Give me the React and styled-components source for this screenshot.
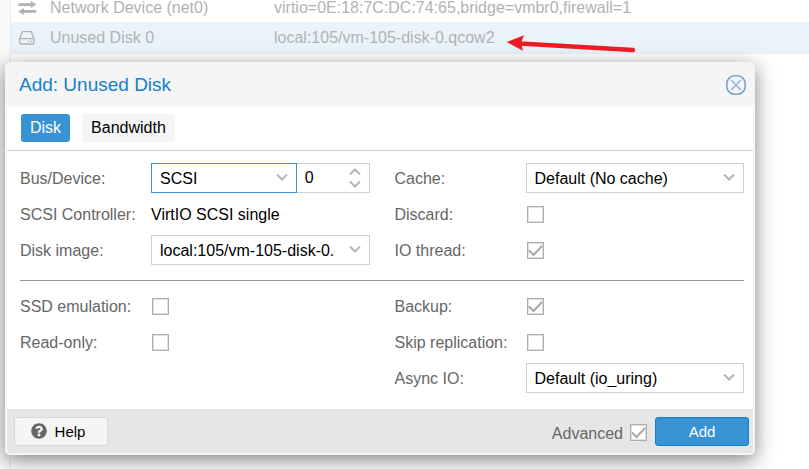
import React, { useState } from 'react';
import styled, { createGlobalStyle, css } from 'styled-components';
import { FaQuestionCircle } from 'react-icons/fa';

const GlobalStyle = createGlobalStyle`
  * {
    box-sizing: border-box;
  }

  body {
    margin: 0;
    background-color: #fafafa;
    color: #000;
  }

  body, button, input, select {
    font-family: "Liberation Sans", Arial, sans-serif;
    font-size: 16px;
  }
`;

const Page = styled.main`
  position: relative;
  min-height: 100vh;
  padding-left: 10px;
  overflow: hidden;
`;

const HardwareList = styled.ul`
  list-style: none;
  margin: 0;
  padding: 0;
  min-height: 100vh;
  border-left: 1px solid #e8e8e8;
  background-color: #fff;
`;

const HardwareRow = styled.li`
  display: grid;
  grid-template-columns: 39px 224px 1fr;
  align-items: center;
  height: ${({ $first }) => ($first ? '22px' : '32px')};
  padding-bottom: ${({ $first }) => ($first ? '8px' : '0')};
  background-color: ${({ $selected }) => ($selected ? '#ebf3fa' : '#fff')};
  color: #b2b2b2;
  line-height: 16px;
  white-space: nowrap;
`;

const RowIcon = styled.svg`
  display: block;
  width: 20px;
  height: 16px;
  margin-left: 6px;
`;

const Arrow = styled.svg`
  position: absolute;
  top: 30px;
  left: 500px;
  width: 140px;
  height: 26px;
`;

const Dialog = styled.section`
  position: absolute;
  top: 62px;
  left: 5px;
  right: 54px;
  border: 2px solid #f5f5f5;
  border-radius: 5px;
  background-color: #fff;
  box-shadow: 0 5px 20px rgba(0, 0, 0, 0.5);
`;

const DialogHeader = styled.header`
  display: flex;
  align-items: center;
  justify-content: space-between;
  height: 43px;
  padding: 0 6px 2px 12px;
  background-color: #f5f5f5;
`;

const Title = styled.h1`
  margin: 0;
  color: #157fcc;
  font-size: 19px;
  font-weight: 400;
`;

const CloseButton = styled.button`
  width: 22px;
  height: 22px;
  padding: 0;
  border: 0;
  background: none;
  cursor: pointer;

  svg {
    display: block;
  }
`;

const Tabs = styled.nav`
  display: flex;
  gap: 12px;
  padding: 7px 14px 8px;
  border-bottom: 1px solid #cfcfcf;
`;

const Tab = styled.button`
  height: 28px;
  padding: 0 9px;
  border: 0;
  border-radius: 3px;
  background-color: ${({ $active }) => ($active ? '#3892d4' : '#f5f5f5')};
  color: ${({ $active }) => ($active ? '#fff' : '#000')};
  cursor: pointer;
`;

const Form = styled.div`
  padding: 12px 9px 16px 13px;
`;

const Columns = styled.div`
  display: grid;
  grid-template-columns: 1fr 1fr;
  column-gap: 25px;
`;

const Column = styled.div`
  display: flex;
  flex-direction: column;
  gap: 6px;
`;

const Separator = styled.hr`
  margin: 15px 0 10px;
  border: 0;
  border-top: 1px solid #949494;
`;

const Row = styled.div`
  display: grid;
  grid-template-columns: 131px 1fr;
  align-items: center;
  height: 30px;
`;

const Label = styled.label`
  padding-top: 2px;
  color: #666;
`;

const DisplayValue = styled.span`
  padding-top: 2px;
`;

const FieldGroup = styled.div`
  display: grid;
  grid-template-columns: 2fr 1fr;
`;

const controlStyle = css`
  display: block;
  width: 100%;
  height: 30px;
  margin: 0;
  padding: 0 34px 0 8px;
  border: 1px solid ${({ $focused }) => ($focused ? '#3892d4' : '#cfcfcf')};
  border-radius: 0;
  background-color: #fff;
  color: #000;
  appearance: none;
  outline: none;
`;

const SelectBox = styled.div`
  position: relative;
  min-width: 0;
`;

const StyledSelect = styled.select`
  ${controlStyle}
`;

const Chevron = styled.svg`
  position: absolute;
  top: 10px;
  right: 9px;
  width: 12px;
  height: 8px;
  fill: none;
  stroke: #b5b5b5;
  stroke-width: 2;
  pointer-events: none;
`;

const NumberInput = styled.input`
  ${controlStyle}
  border-left: 0;
`;

const Stepper = styled.div`
  position: absolute;
  top: 3px;
  right: 9px;
  display: flex;
  flex-direction: column;
`;

const StepButton = styled.button`
  display: flex;
  align-items: center;
  height: 12px;
  padding: 0;
  border: 0;
  background: none;
  cursor: pointer;

  svg {
    width: 12px;
    height: 8px;
    fill: none;
    stroke: #b5b5b5;
    stroke-width: 2;
  }
`;

const CheckWrapper = styled.span`
  position: relative;
  display: block;
  width: 17px;
  height: 17px;
  margin-left: ${({ $inset }) => ($inset ? '1px' : '0')};

  svg {
    position: absolute;
    top: 0;
    left: 0;
    pointer-events: none;
  }
`;

const CheckInput = styled.input`
  display: block;
  width: 17px;
  height: 17px;
  margin: 0;
  border: 1px solid #adadad;
  box-shadow: inset 0 0 0 1px #e0e0e0;
  background-color: #fff;
  appearance: none;
`;

const DialogFooter = styled.footer`
  display: flex;
  align-items: center;
  height: 44px;
  padding: 0 4px 0 7px;
  background-color: #e6e6e6;
  border-radius: 0 0 3px 3px;
`;

const Button = styled.button`
  display: flex;
  align-items: center;
  justify-content: center;
  gap: 8px;
  width: 94px;
  height: 29px;
  padding: 0 6px 0 0;
  border: 1px solid #d8d8d8;
  border-radius: 3px;
  background-color: #f5f5f5;
  font-size: 15px;
  cursor: pointer;

  svg {
    color: #666;
  }

  ${({ $primary }) => $primary && css`
    padding: 0;
    border-color: #157fcc;
    background-color: #3892d4;
    color: #fff;
  `}
`;

const Advanced = styled.div`
  display: flex;
  align-items: center;
  gap: 7px;
  margin: 0 8px 0 auto;
  padding-top: 3px;
`;

const Select = ({ id, options, focused }) => (
  <SelectBox>
    <StyledSelect id={id} $focused={focused}>
      {options.map(o => <option key={o}>{o}</option>)}
    </StyledSelect>
    <Chevron viewBox='0 0 12 8'><path d='M1 1.5 L6 6.5 L11 1.5' /></Chevron>
  </SelectBox>
);

const Checkbox = ({ id, initial = false, inset = true }) => {
  const [checked, setChecked] = useState(initial);

  return (
    <CheckWrapper $inset={inset}>
      <CheckInput
        id={id}
        type='checkbox'
        checked={checked}
        onChange={e => setChecked(e.target.checked)}
      />
      {checked && (
        <svg width='17' height='17' viewBox='0 0 17 17' fill='none' stroke='#a8a8a8' strokeWidth='2'>
          <path d='M2 8.5 L6.5 13 L15 4' />
        </svg>
      )}
    </CheckWrapper>
  );
};

const CheckRow = ({ id, label, initial }) => (
  <Row>
    <Label htmlFor={id}>{label}</Label>
    <Checkbox id={id} initial={initial} />
  </Row>
);

const SelectRow = ({ id, label, options }) => (
  <Row>
    <Label htmlFor={id}>{label}</Label>
    <Select id={id} options={options} />
  </Row>
);

const DeviceNumber = () => {
  const [value, setValue] = useState(0);

  return (
    <SelectBox>
      <NumberInput
        type='text'
        inputMode='numeric'
        aria-label='Device number'
        value={value}
        onChange={e => setValue(Number(e.target.value) || 0)}
      />
      <Stepper>
        <StepButton type='button' aria-label='Increase' onClick={() => setValue(value + 1)}>
          <svg viewBox='0 0 12 8'><path d='M1 6.5 L6 1.5 L11 6.5' /></svg>
        </StepButton>
        <StepButton type='button' aria-label='Decrease' onClick={() => setValue(Math.max(0, value - 1))}>
          <svg viewBox='0 0 12 8'><path d='M1 1.5 L6 6.5 L11 1.5' /></svg>
        </StepButton>
      </Stepper>
    </SelectBox>
  );
};

const TABS = ['Disk', 'Bandwidth'];

export default function App() {
  const [activeTab, setActiveTab] = useState('Disk');

  return (
    <Page>
      <GlobalStyle />
      <HardwareList>
        <HardwareRow $first>
          <RowIcon viewBox='0 0 20 16' fill='currentColor'>
            <path d='M1.4 3.3 H13.8 V0.8 L19.2 4.5 L13.8 8 V5.9 H1.4 Z' />
            <path d='M19.2 10.1 H6.8 V7.9 L1.2 11.4 L6.8 15 V12.7 H19.2 Z' />
          </RowIcon>
          <span>Network Device (net0)</span>
          <span>virtio=0E:18:7C:DC:74:65,bridge=vmbr0,firewall=1</span>
        </HardwareRow>
        <HardwareRow $selected>
          <RowIcon viewBox='0 0 20 16' fill='none' stroke='currentColor' strokeWidth='1.4'>
            <path d='M2.6 8.6 L5 2.4 Q5.3 1.6 6.1 1.6 H13.5 Q14.3 1.6 14.6 2.4 L17 8.6 V12.8 Q17 14 15.8 14 H3.8 Q2.6 14 2.6 12.8 Z M2.6 8.6 H17' />
            <path d='M10.8 11.4 H12.3 M13.5 11.4 H15' />
          </RowIcon>
          <span>Unused Disk 0</span>
          <span>local:105/vm-105-disk-0.qcow2</span>
        </HardwareRow>
      </HardwareList>

      <Dialog role='dialog' aria-labelledby='dialog-title'>
        <DialogHeader>
          <Title id='dialog-title'>Add: Unused Disk</Title>
          <CloseButton type='button' aria-label='Close'>
            <svg width='22' height='22' viewBox='0 0 22 22' fill='none'>
              <rect x='1.8' y='1.8' width='18.4' height='18.4' rx='7.8' stroke='#6fa6d2' strokeWidth='1.6' />
              <path d='M6.2 6.2 L15.8 15.8 M15.8 6.2 L6.2 15.8' stroke='#93bbe4' strokeWidth='1.7' />
            </svg>
          </CloseButton>
        </DialogHeader>
        <Tabs>
          {TABS.map(t =>
            <Tab key={t} type='button' $active={t === activeTab} onClick={() => setActiveTab(t)}>{t}</Tab>
          )}
        </Tabs>
        <Form>
          <Columns>
            <Column>
              <Row>
                <Label htmlFor='bus'>Bus/Device:</Label>
                <FieldGroup>
                  <Select id='bus' options={['SCSI', 'SATA', 'IDE']} focused />
                  <DeviceNumber />
                </FieldGroup>
              </Row>
              <Row>
                <Label as='span'>SCSI Controller:</Label>
                <DisplayValue>VirtIO SCSI single</DisplayValue>
              </Row>
              <SelectRow id='image' label='Disk image:' options={['local:105/vm-105-disk-0.qcow2']} />
            </Column>
            <Column>
              <SelectRow id='cache' label='Cache:' options={['Default (No cache)']} />
              <CheckRow id='discard' label='Discard:' />
              <CheckRow id='iothread' label='IO thread:' initial />
            </Column>
          </Columns>
          <Separator />
          <Columns>
            <Column>
              <CheckRow id='ssd' label='SSD emulation:' />
              <CheckRow id='readonly' label='Read-only:' />
            </Column>
            <Column>
              <CheckRow id='backup' label='Backup:' initial />
              <CheckRow id='replication' label='Skip replication:' />
              <SelectRow id='aio' label='Async IO:' options={['Default (io_uring)']} />
            </Column>
          </Columns>
        </Form>
        <DialogFooter>
          <Button type='button'>
            <FaQuestionCircle size={16} />
            Help
          </Button>
          <Advanced>
            <Label htmlFor='advanced'>Advanced</Label>
            <Checkbox id='advanced' initial inset={false} />
          </Advanced>
          <Button type='button' $primary>Add</Button>
        </DialogFooter>
      </Dialog>

      <Arrow viewBox='0 0 140 26'>
        <path d='M20 13.5 L133 20' stroke='#ed1c24' strokeWidth='4.4' strokeLinecap='round' />
        <path d='M6.5 12 L24 5.2 L21 13 L23 20.8 Z' fill='#ed1c24' />
      </Arrow>
    </Page>
  );
}
